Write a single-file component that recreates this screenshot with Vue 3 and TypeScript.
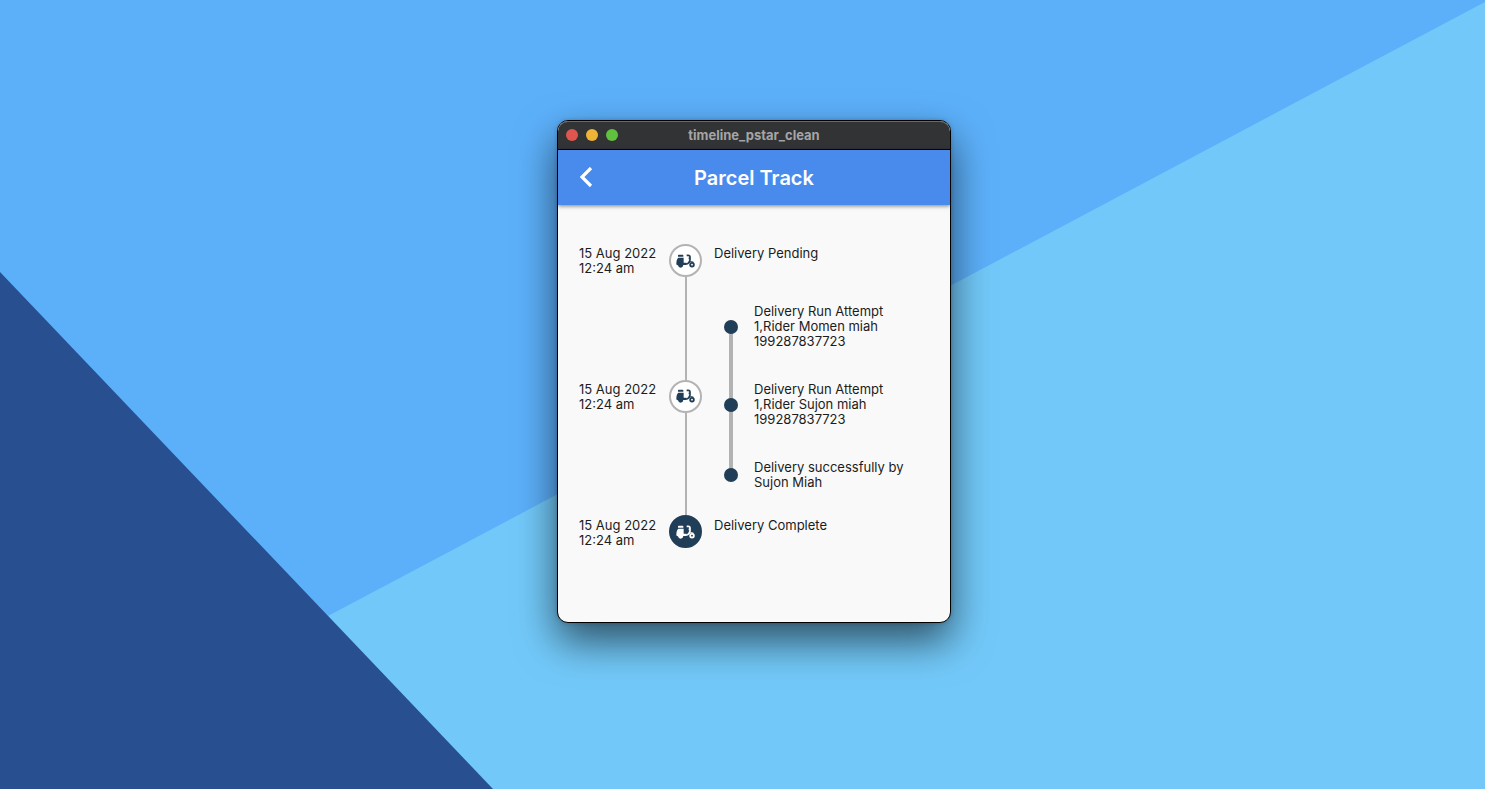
<script setup lang="ts">
import { h } from 'vue'

interface TrackEvent {
  date: string
  time: string
  title?: string
  attempts?: string[]
  done?: boolean
}

const events: TrackEvent[] = [
  { date: '15 Aug 2022', time: '12:24 am', title: 'Delivery Pending' },
  {
    date: '15 Aug 2022',
    time: '12:24 am',
    attempts: [
      'Delivery Run Attempt 1,Rider Momen miah 199287837723',
      'Delivery Run Attempt 1,Rider Sujon miah 199287837723',
      'Delivery successfully by Sujon Miah',
    ],
  },
  { date: '15 Aug 2022', time: '12:24 am', title: 'Delivery Complete', done: true },
]

const Scooter = () =>
  h('svg', { viewBox: '0 0 57 42', width: 19, height: 14, 'aria-hidden': 'true' }, [
    h('path', {
      fill: 'currentColor',
      d: 'M6 4q0-2 2-2h12q2 0 2 2v4H6zM7 11h16v15h8v7H22q-1 8-8 8t-8-7q-5 0-5-5 0-14 6-18z',
    }),
    h('path', {
      d: 'M32 4h5q5 0 5 5 0 4-4 4M42 8v10q-1 5-4 8-3 4-8 4h-8',
      fill: 'none',
      stroke: 'currentColor',
      'stroke-width': 5,
    }),
    h('circle', { cx: 48, cy: 32, r: 5.5, fill: 'none', stroke: 'currentColor', 'stroke-width': 5.5 }),
    h('path', { d: 'M39 25q7-5 14 0', fill: 'none', stroke: 'currentColor', 'stroke-width': 3 }),
  ])
</script>

<template>
  <div class="desktop">
    <svg class="wallpaper" viewBox="0 0 1485 789" preserveAspectRatio="none" aria-hidden="true">
      <rect width="1485" height="789" fill="#5cb0fa" />
      <path d="M328 616 1485 2V789H492Z" fill="#72c9f9" />
      <path d="M0 272 493 789H0Z" fill="#284f90" />
    </svg>
    <main class="window">
      <div class="titlebar">
        <div class="lights"><i class="red"></i><i class="yellow"></i><i class="green"></i></div>
        <span class="name">timeline_pstar_clean</span>
      </div>
      <header class="appbar">
        <button class="back" type="button" aria-label="Back">
          <svg viewBox="0 0 14 22" width="14" height="22">
            <path d="M12 1 3 10l9 9" fill="none" stroke="currentColor" stroke-width="3.2" />
          </svg>
        </button>
        <h1>Parcel Track</h1>
      </header>
      <ol class="timeline">
        <li v-for="(event, i) in events" :key="i" class="event" :class="{ done: event.done }">
          <time class="date">{{ event.date }}<br />{{ event.time }}</time>
          <div class="rail">
            <span class="marker"><Scooter /></span>
          </div>
          <p v-if="event.title" class="title">{{ event.title }}</p>
          <ul v-else class="attempts">
            <li v-for="(attempt, j) in event.attempts" :key="j" class="attempt">
              <span class="track"><i class="dot"></i></span>
              <p>{{ attempt }}</p>
            </li>
          </ul>
        </li>
      </ol>
    </main>
  </div>
</template>

<style>
body {
  margin: 0;
}
</style>

<style scoped>
* {
  box-sizing: border-box;
}
.desktop {
  position: relative;
  display: flex;
  align-items: center;
  justify-content: center;
  min-height: 100vh;
  padding: 0 0 46px 23px;
  overflow: hidden;
  font-family: Inter, "Liberation Sans", sans-serif;
}
.wallpaper {
  position: absolute;
  inset: 0;
  width: 100%;
  height: 100%;
}
.window {
  position: relative;
  width: 100%;
  max-width: 394px;
  overflow: hidden;
  border: 1px solid #000;
  border-radius: 11px;
  background: #f9f9f9;
  box-shadow: 0 18px 40px rgba(0, 0, 0, 0.6), 0 0 4px rgba(0, 0, 0, 0.2);
}
.titlebar {
  display: grid;
  grid-template-columns: 1fr auto 1fr;
  align-items: center;
  height: 29px;
  padding: 0 8px;
  border-bottom: 1px solid #000;
  border-radius: 10px 10px 0 0;
  background: #323335;
  box-shadow: inset 0 1px 0 #68696a;
}
.lights {
  display: flex;
  gap: 8px;
}
.lights i {
  width: 12px;
  height: 12px;
  border-radius: 50%;
}
.red {
  background: #e0564f;
}
.yellow {
  background: #efb336;
}
.green {
  background: #62c03f;
}
.name {
  color: #a5a5a6;
  font-size: 13px;
  font-weight: 700;
  line-height: 16px;
}
.appbar {
  position: relative;
  display: grid;
  grid-template-columns: 56px 1fr 56px;
  align-items: center;
  height: 55px;
  color: #fff;
  background: #498aed;
  box-shadow: 0 1px 4px rgba(0, 0, 0, 0.5);
}
.back {
  display: flex;
  align-items: center;
  justify-content: center;
  height: 44px;
  padding: 0;
  border: 0;
  color: inherit;
  background: none;
}
h1 {
  margin: 0;
  font-size: 20px;
  font-weight: 600;
  line-height: 24px;
  text-align: center;
}
ol,
ul,
p {
  margin: 0;
  padding: 0;
  list-style: none;
}
.timeline {
  padding: 39px 24px 74px 21px;
  color: #1c1c1c;
  font-size: 13px;
  line-height: 15px;
}
.event {
  display: grid;
  grid-template-columns: 78px 33px 1fr;
  column-gap: 12px;
  min-height: 48px;
}
.date,
.title {
  padding-top: 2px;
  white-space: nowrap;
}
.rail {
  display: flex;
  flex-direction: column;
  align-items: center;
}
.rail::before,
.rail::after {
  content: "";
  flex: 1;
  width: 2px;
  background: #b3b3b3;
}
.event:first-child .rail::before,
.event:last-child .rail::after {
  display: none;
}
.marker {
  display: flex;
  align-items: center;
  justify-content: center;
  width: 33px;
  height: 33px;
  border: 2px solid #b3b3b3;
  border-radius: 50%;
  color: #203e57;
  background: #fff;
}
.event:nth-child(2) .date {
  align-self: center;
}
.done .date,
.done .title {
  padding-top: 18px;
}
.done .marker {
  border-color: #203e57;
  color: #fff;
  background: #203e57;
}
.attempts {
  padding: 12px 0 10px 10px;
}
.attempt {
  display: grid;
  grid-template-columns: 14px 1fr;
  column-gap: 16px;
}
.attempt + .attempt {
  padding-top: 33px;
}
.track {
  position: relative;
  display: flex;
  align-items: center;
  justify-content: center;
}
.attempt:not(:last-child) .track::after {
  content: "";
  position: absolute;
  top: 50%;
  left: 5px;
  width: 4px;
  height: 78px;
  background: #b3b3b3;
}
.attempt:nth-child(2) .track::after {
  height: 70px;
}
.dot {
  position: relative;
  z-index: 1;
  width: 14px;
  height: 14px;
  border-radius: 50%;
  background: #203e57;
}
</style>
